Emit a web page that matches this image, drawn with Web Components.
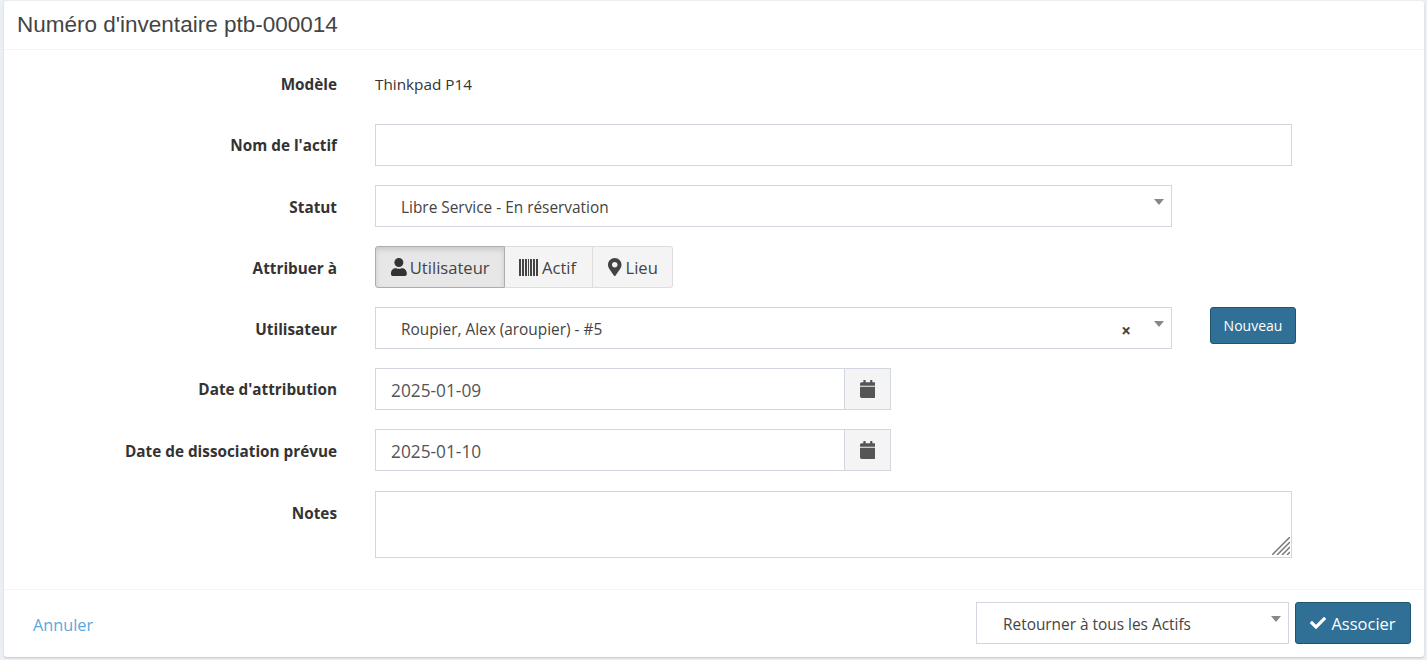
<!DOCTYPE html>
<html lang="fr">
<head>
<meta charset="utf-8">
<title>Numéro d'inventaire ptb-000014</title>
<style>
    html, body { margin: 0; height: 100%; }
    body {
        background: #ecf0f5;
        color: #333;
        font: 15.3px "Open Sans", "Liberation Sans", sans-serif;
        overflow: hidden;
    }
</style>
</head>
<body>

<inv-box>
    <span slot="title">Numéro d'inventaire ptb-000014</span>

    <inv-row label="Modèle" class="static"><span class="value">Thinkpad P14</span></inv-row>
    <inv-row label="Nom de l'actif"><inv-input></inv-input></inv-row>
    <inv-row label="Statut" class="lower"><inv-select style="width:797px">Libre Service - En réservation</inv-select></inv-row>
    <inv-row label="Attribuer à" class="lower"><inv-toggle></inv-toggle></inv-row>
    <inv-row label="Utilisateur" class="lower">
        <inv-select style="width:797px" clearable>Roupier, Alex (aroupier) - #5</inv-select>
        <inv-button small style="margin-left:38px">Nouveau</inv-button>
    </inv-row>
    <inv-row label="Date d'attribution"><inv-date value="2025-01-09"></inv-date></inv-row>
    <inv-row label="Date de dissociation prévue" class="wide lower"><inv-date value="2025-01-10"></inv-date></inv-row>
    <inv-row label="Notes" class="lower"><inv-input multiline></inv-input></inv-row>

    <a slot="cancel" href="#">Annuler</a>
    <inv-select slot="actions" style="width:313px;padding-left:26px">Retourner à tous les Actifs</inv-select>
    <inv-button slot="actions" icon="check">Associer</inv-button>
</inv-box>

<script>
const ICONS = {
    user: [448, "M224 256c70.7 0 128-57.3 128-128S294.7 0 224 0 96 57.3 96 128s57.3 128 128 128zm89.6 32h-16.7c-22.2 10.2-46.9 16-72.9 16s-50.6-5.8-72.9-16h-16.7C60.2 288 0 348.2 0 422.4V464c0 26.5 21.5 48 48 48h352c26.5 0 48-21.5 48-48v-41.6c0-74.2-60.2-134.4-134.4-134.4z"],
    marker: [384, "M172.268 501.67C26.97 291.031 0 268.413 0 192 0 85.961 85.961 0 192 0s192 85.961 192 192c0 76.413-26.97 99.031-172.268 309.67-9.535 13.774-29.93 13.773-39.464 0zM192 272c44.183 0 80-35.817 80-80s-35.817-80-80-80-80 35.817-80 80 35.817 80 80 80z"],
    calendar: [448, "M12 192h424c6.6 0 12 5.4 12 12v260c0 26.5-21.5 48-48 48H48c-26.5 0-48-21.5-48-48V204c0-6.6 5.4-12 12-12zm436-44v-36c0-26.5-21.5-48-48-48h-48V12c0-6.6-5.4-12-12-12h-40c-6.6 0-12 5.4-12 12v52H160V12c0-6.6-5.4-12-12-12h-40c-6.6 0-12 5.4-12 12v52H48C21.5 64 0 85.5 0 112v36c0 6.6 5.4 12 12 12h424c6.6 0 12-5.4 12-12z"],
    check: [512, "M173.898 439.404l-166.4-166.4c-9.997-9.997-9.997-26.206 0-36.204l36.203-36.204c9.997-9.998 26.207-9.998 36.204 0L192 312.69 432.095 72.596c9.997-9.997 26.207-9.997 36.204 0l36.203 36.204c9.997 9.997 9.997 26.206 0 36.204l-294.4 294.401c-9.998 9.997-26.207 9.997-36.204-.001z"]
};

function icon(name, size) {
    const [w, d] = ICONS[name];
    return `<svg viewBox="0 0 ${w} 512" width="${size * w / 512}" height="${size}" fill="currentColor" style="flex:none" aria-hidden="true"><path d="${d}"/></svg>`;
}

const BARCODE = `<svg viewBox="0 0 19 17" width="19" height="17" fill="currentColor" style="flex:none" aria-hidden="true"><path d="M0 0h2v17H0zM3 0h2v17H3zM6 0h2v17H6zM9 0h1v17H9zM11 0h2v17h-2zM14 0h2v17h-2zM17 0h2v17h-2z"/></svg>`;

class InvBox extends HTMLElement {
    connectedCallback() {
        this.attachShadow({mode: "open"});
        this.shadowRoot.innerHTML = `
            <style>
                :host {
                    display: block;
                    margin: 1px 3px 0 4px;
                    height: 656px;
                    background: #fff;
                    border-radius: 3px;
                    box-shadow: 0 1px 2px rgba(0,0,0,.18);
                }
                .frame { display: flex; flex-direction: column; height: 100%; }
                header {
                    height: 48px;
                    padding-left: 13px;
                    border-bottom: 1px solid #f4f4f4;
                    font: 22.5px/47px "Liberation Sans", Arial, sans-serif;
                    color: #444;
                }
                main { flex: 1; display: block; padding-top: 16px; }
                footer {
                    height: 68px;
                    box-sizing: border-box;
                    border-top: 1px solid #f4f4f4;
                    padding: 12px 13px 0 29px;
                    display: flex;
                    justify-content: space-between;
                }
                ::slotted(a) {
                    color: #5aa7dc;
                    font-size: 16.3px;
                    line-height: 46px;
                    text-decoration: none;
                }
                .actions { display: flex; gap: 6px; }
            </style>
            <div class="frame">
                <header><slot name="title"></slot></header>
                <main><slot></slot></main>
                <footer>
                    <slot name="cancel"></slot>
                    <div class="actions"><slot name="actions"></slot></div>
                </footer>
            </div>
        `;
    }
}

class InvRow extends HTMLElement {
    connectedCallback() {
        this.attachShadow({mode: "open"});
        this.shadowRoot.innerHTML = `
            <style>
                :host { display: flex; align-items: flex-start; margin-bottom: 19px; }
                :host(.static) { height: 39px; }
                :host(.wide) { margin-bottom: 20px; }
                label {
                    width: 333px;
                    height: 38px;
                    flex: none;
                    text-align: right;
                    font-weight: 700;
                    font-size: 15.3px;
                    color: #333;
                    line-height: 42px;
                    margin-right: 38px;
                }
                :host(.lower) label { line-height: 44px; }
                :host(.static) label, :host(.static) .control { line-height: 36px; }
                .control { display: flex; align-items: flex-start; flex: 1; min-width: 0; color: #333; line-height: 42px; }
            </style>
            <label>${this.getAttribute("label")}</label>
            <div class="control"><slot></slot></div>
        `;
    }
}

class InvInput extends HTMLElement {
    connectedCallback() {
        const multi = this.hasAttribute("multiline");
        this.attachShadow({mode: "open"});
        this.shadowRoot.innerHTML = `
            <style>
                :host { display: block; width: 917px; height: ${multi ? 67 : 42}px; box-sizing: border-box; border: 1px solid #d2d6de; background: #fff; position: relative; }
                svg { position: absolute; right: 1px; bottom: 2px; }
            </style>
            ${multi ? `<svg width="18" height="18" viewBox="0 0 18 18" stroke="#777" fill="none" stroke-width="1.5"><path d="M0 18 18 0M5 18 18 5M10 18l8-8M15 18l3-3"/></svg>` : ""}
        `;
    }
}

class InvSelect extends HTMLElement {
    connectedCallback() {
        const clearable = this.hasAttribute("clearable");
        this.attachShadow({mode: "open"});
        this.shadowRoot.innerHTML = `
            <style>
                :host {
                    display: block;
                    height: 42px;
                    box-sizing: border-box;
                    border: 1px solid #d2d6de;
                    background: #fff;
                    position: relative;
                    padding-left: 25px;
                    color: #444;
                    font-size: 15.4px;
                    line-height: 43px;
                    white-space: nowrap;
                }
                .arrow {
                    position: absolute;
                    top: 13px;
                    right: 7px;
                    border-style: solid;
                    border-width: 6px 5px 0;
                    border-color: #888 transparent transparent;
                }
                .clear {
                    position: absolute;
                    right: 40px;
                    top: 0;
                    font-weight: 700;
                    font-size: 17px;
                    color: #444;
                    line-height: 46px;
                }
            </style>
            <slot></slot>
            ${clearable ? `<span class="clear">×</span>` : ""}
            <span class="arrow"></span>
        `;
    }
}

class InvToggle extends HTMLElement {
    connectedCallback() {
        this.attachShadow({mode: "open"});
        this.shadowRoot.innerHTML = `
            <style>
                :host { display: inline-flex; height: 42px; font-size: 16.6px; color: #444; }
                span {
                    display: flex;
                    flex: none;
                    align-items: center;
                    gap: 4px;
                    box-sizing: border-box;
                    padding: 0 0 0 14px;
                    background: #f4f4f4;
                    border: 1px solid #ddd;
                    border-left-width: 0;
                    white-space: nowrap;
                }
                span:nth-of-type(1) {
                    border-left-width: 1px;
                    border-radius: 3px 0 0 3px;
                    background: #e7e7e7;
                    border-color: #adadad;
                    box-shadow: inset 0 3px 5px rgba(0,0,0,.125);
                    width: 130px;
                    padding-left: 15px;
                    gap: 3px;
                    color: #333;
                }
                span:nth-of-type(1) b { color: #444; }
                span:nth-of-type(2) { width: 88px; }
                span:nth-of-type(3) { border-radius: 0 3px 3px 0; width: 80px; padding-left: 15px; }
                b { font-weight: 400; padding-top: 2px; }
            </style>
            <span>${icon("user", 18)}<b>Utilisateur</b></span>
            <span>${BARCODE}<b>Actif</b></span>
            <span>${icon("marker", 18)}<b>Lieu</b></span>
        `;
    }
}

class InvDate extends HTMLElement {
    connectedCallback() {
        this.attachShadow({mode: "open"});
        this.shadowRoot.innerHTML = `
            <style>
                :host { display: flex; width: 516px; height: 42px; font-size: 17.3px; color: #555; }
                .field {
                    flex: 1;
                    box-sizing: border-box;
                    border: 1px solid #d2d6de;
                    padding-left: 15px;
                    line-height: 43px;
                }
                .addon {
                    width: 46px;
                    box-sizing: border-box;
                    border: 1px solid #d2d6de;
                    border-left: 0;
                    background: #f4f4f4;
                    display: flex;
                    align-items: center;
                    justify-content: center;
                }
            </style>
            <div class="field">${this.getAttribute("value")}</div>
            <div class="addon">${icon("calendar", 18)}</div>
        `;
    }
}

class InvButton extends HTMLElement {
    connectedCallback() {
        const small = this.hasAttribute("small");
        const name = this.getAttribute("icon");
        this.attachShadow({mode: "open"});
        this.shadowRoot.innerHTML = `
            <style>
                :host {
                    display: inline-flex;
                    align-items: center;
                    justify-content: center;
                    gap: 5px;
                    box-sizing: border-box;
                    width: ${small ? 86 : 116}px;
                    height: ${small ? 37 : 42}px;
                    background: #306f96;
                    border: 1px solid #23546f;
                    border-radius: 3px;
                    color: #fff;
                    font-size: ${small ? 14 : 16.5}px;
                }
            </style>
            ${name ? icon(name, 16) : ""}<slot></slot>
        `;
    }
}

customElements.define("inv-box", InvBox);
customElements.define("inv-row", InvRow);
customElements.define("inv-input", InvInput);
customElements.define("inv-select", InvSelect);
customElements.define("inv-toggle", InvToggle);
customElements.define("inv-date", InvDate);
customElements.define("inv-button", InvButton);
</script>
</body>
</html>
